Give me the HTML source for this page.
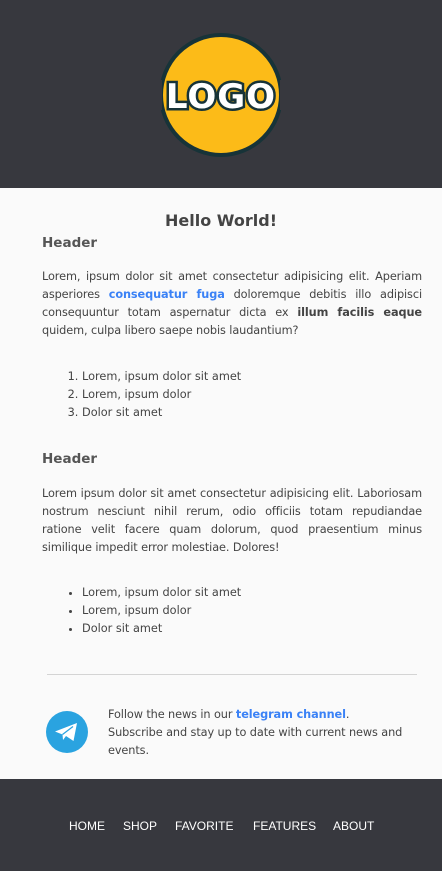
<!DOCTYPE html>
<html><head><style>
*{margin:0;padding:0;box-sizing:border-box}
body{width:442px;height:871px;background:#fafafa;font-family:"DejaVu Sans","Liberation Sans",sans-serif;color:#444;font-size:11.3px;overflow:hidden;position:relative}
.top{height:188px;background:#37383e;position:relative}
.c{position:absolute;left:42px;right:20px}
h1{position:absolute;top:211px;left:0;right:0;text-align:center;font-size:16px;font-weight:bold;color:#444}
h2{font-size:13.5px;font-weight:bold;color:#555}
p{text-align:justify;line-height:18px;letter-spacing:-0.1px}
a{color:#3b82f6;text-decoration:none;font-weight:bold}
ol,ul{position:absolute;left:82px;line-height:18px}
ul{list-style:disc}
.foot{position:absolute;top:779px;left:0;width:442px;height:92px;background:#37383e;color:#fff;font-family:"Liberation Sans",sans-serif;font-size:12px}
.foot span{position:absolute;top:40px}
</style></head><body>
<div class="top">
<svg width="130" height="130" viewBox="0 0 130 130" style="position:absolute;left:156px;top:30px">
<circle cx="65" cy="65" r="60" fill="#fcbb18" stroke="#173338" stroke-width="4"/>
<rect x="0" y="50" width="6" height="30" fill="#37383e"/><rect x="124" y="50" width="6" height="30" fill="#37383e"/>
<text x="65" y="78" text-anchor="middle" font-family="DejaVu Sans" font-weight="bold" font-size="34" fill="#fff" stroke="#173338" stroke-width="5" paint-order="stroke" letter-spacing="1">LOGO</text>
</svg>
</div>
<h1>Hello World!</h1>
<h2 class="c" style="top:235px">Header</h2>
<p class="c" style="top:268px">Lorem, ipsum dolor sit amet consectetur adipisicing elit. Aperiam asperiores <a>consequatur fuga</a> doloremque debitis illo adipisci consequuntur totam aspernatur dicta ex <b>illum facilis eaque</b> quidem, culpa libero saepe nobis laudantium?</p>
<ol style="top:368px"><li>Lorem, ipsum dolor sit amet</li><li>Lorem, ipsum dolor</li><li>Dolor sit amet</li></ol>
<h2 class="c" style="top:451px">Header</h2>
<p class="c" style="top:485px">Lorem ipsum dolor sit amet consectetur adipisicing elit. Laboriosam nostrum nesciunt nihil rerum, odio officiis totam repudiandae ratione velit facere quam dolorum, quod praesentium minus similique impedit error molestiae. Dolores!</p>
<ul style="top:584px"><li>Lorem, ipsum dolor sit amet</li><li>Lorem, ipsum dolor</li><li>Dolor sit amet</li></ul>
<div style="position:absolute;top:674px;left:47px;width:370px;height:1px;background:#d4d4d4"></div>
<svg width="42" height="42" viewBox="0 0 42 42" style="position:absolute;left:46px;top:711px">
<circle cx="21" cy="21" r="21" fill="#2aa3e0"/>
<path d="M9 20.5 L31 12 L27.5 30 L20 25 L17 29 L16.5 23.5 Z" fill="#fff"/>
<path d="M16.5 23.5 L27 15.5" stroke="#2aa3e0" stroke-width="1.2" fill="none"/>
</svg>
<p style="position:absolute;left:108px;top:706px;width:305px;text-align:left">Follow the news in our <a>telegram channel</a>.<br>Subscribe and stay up to date with current news and events.</p>
<div class="foot"><span style="left:69px">HOME</span><span style="left:123px">SHOP</span><span style="left:175px">FAVORITE</span><span style="left:253px">FEATURES</span><span style="left:333px">ABOUT</span></div>
</body></html>
